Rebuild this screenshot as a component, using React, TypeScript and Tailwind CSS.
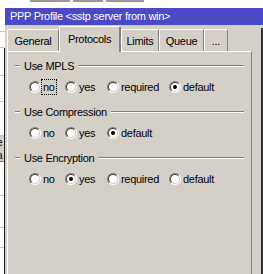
import React from 'react';

type RadioProps = {
  label: string;
  checked?: boolean;
  focused?: boolean;
  className?: string;
};

const Radio: React.FC<RadioProps> = ({ label, checked = false, focused = false, className = '' }) => (
  <div className={`flex items-center h-[16px] ${className}`}>
    {/* classic sunken radio circle */}
    <div className="w-[12px] h-[12px] shrink-0 rounded-full border border-t-[#808080] border-l-[#808080] border-r-white border-b-white">
      <div className="w-full h-full rounded-full border border-t-[#404040] border-l-[#404040] border-r-[#d4d0c8] border-b-[#d4d0c8] bg-white flex items-center justify-center">
        {checked && <div className="w-[4px] h-[4px] rounded-full bg-black"></div>}
      </div>
    </div>
    <span
      className={`h-[16px] leading-[14px] px-[1px] border ${focused ? 'border-dotted border-black' : 'border-transparent'}`}
    >
      {label}
    </span>
  </div>
);

const Etched: React.FC<{ className?: string }> = ({ className = '' }) => (
  <div className={`h-[2px] border-t border-t-[#808080] border-b border-b-white ${className}`}></div>
);

const Section: React.FC<{ title: string; first?: boolean; children: React.ReactNode }> = ({ title, first = false, children }) => (
  <div className={`flex flex-col px-[7px] ${first ? 'pt-[7px]' : 'pt-[10px]'}`}>
    <div className="flex items-center h-[14px]">
      <Etched className="w-[5px]" />
      <span className="px-[4px] leading-[14px]">{title}</span>
      <Etched className="flex-1" />
    </div>
    <div className="flex items-center mt-[6px] pl-[14px]">{children}</div>
  </div>
);

const tabs = [
  { label: 'General', w: 'w-[52px]' },
  { label: 'Protocols', w: 'w-[62px]', active: true },
  { label: 'Limits', w: 'w-[38px]' },
  { label: 'Queue', w: 'w-[45px]' },
  { label: '...', w: 'w-[24px]' },
];

export default function App() {
  return (
    <div
      className="w-[263px] h-[274px] overflow-hidden bg-white flex flex-col text-[11px] tracking-[-0.3px] text-black"
      style={{ fontFamily: '"Liberation Sans", Arial, sans-serif' }}
    >
      {/* background app peeking above the window */}
      <div className="h-[8px] shrink-0 flex items-start gap-[3px] pl-[30px]">
        <div className="w-[40px] h-[2px] bg-[#9a9a9a]"></div>
        <div className="w-[30px] h-[2px] bg-[#9a9a9a]"></div>
        <div className="w-[38px] h-[2px] bg-[#9a9a9a]"></div>
      </div>

      <div className="flex flex-1 min-h-0">
        {/* background app on the left */}
        <div className="w-[5px] shrink-0 flex flex-col">
          <div className="h-[24px] border-b border-[#c8c8c8]"></div>
          <div className="h-[16px] border-b border-[#c8c8c8] mr-[1px]"></div>
          <div className="flex-1 flex flex-col border-r border-r-[#202020]">
            <div className="h-[28px] border-b border-[#c8c8c8]"></div>
            <div className="h-[26px] border-b border-[#c8c8c8]"></div>
            <div className="h-[34px] border-b border-[#c8c8c8]"></div>
            <div className="h-[14px] bg-[#d4d0c8] text-[10px] leading-[14px] overflow-hidden">
              <span className="-ml-[3px]">e</span>
            </div>
            <div className="h-[12px] bg-[#d4d0c8] border-b border-[#808080] text-[10px] leading-[12px] overflow-hidden">
              <span className="-ml-[3px]">a</span>
            </div>
            <div className="h-[34px] border-b border-[#c8c8c8]"></div>
            <div className="h-[32px] border-b border-[#c8c8c8]"></div>
            <div className="h-[20px] border-b border-[#c8c8c8]"></div>
          </div>
        </div>

        {/* window */}
        <div className="flex-1 flex flex-col bg-[#d4d0c8]">
          <div className="h-[17px] shrink-0 bg-[#4a4ac6] text-white flex items-center pl-[5px]">
            PPP Profile &lt;sstp server from win&gt;
          </div>

          <div className="flex flex-1 min-h-0 pt-[1px]">
            <div className="w-[2px] shrink-0"></div>
            <div className="w-[245px] shrink-0 flex flex-col">
              {/* tabs */}
              <div className="h-[25px] shrink-0 flex items-end">
                {tabs.map((t) =>
                  t.active ? (
                    <div
                      key={t.label}
                      className={`${t.w} h-[26px] -mb-[1px] relative z-10 bg-[#d4d0c8] border-l border-t border-white border-r-2 border-r-[#808080] rounded-t-[2px] text-center pt-[5px] leading-[14px]`}
                    >
                      {t.label}
                    </div>
                  ) : (
                    <div
                      key={t.label}
                      className={`${t.w} h-[22px] bg-[#d4d0c8] border-l border-t border-white border-r border-r-[#808080] rounded-t-[2px] text-center pt-[4px] leading-[14px]`}
                    >
                      {t.label}
                    </div>
                  )
                )}
              </div>

              {/* tab panel */}
              <div className="flex-1 border-t border-l border-white border-r border-r-[#808080]">
                <Section title="Use MPLS" first>
                  <Radio label="no" focused className="w-[36px]" />
                  <Radio label="yes" className="w-[42px]" />
                  <Radio label="required" className="w-[62px]" />
                  <Radio label="default" checked />
                </Section>
                <Section title="Use Compression">
                  <Radio label="no" className="w-[36px]" />
                  <Radio label="yes" className="w-[42px]" />
                  <Radio label="default" checked />
                </Section>
                <Section title="Use Encryption">
                  <Radio label="no" className="w-[36px]" />
                  <Radio label="yes" checked className="w-[42px]" />
                  <Radio label="required" className="w-[62px]" />
                  <Radio label="default" />
                </Section>
              </div>
            </div>
            <div className="flex-1"></div>
            <div className="w-[2px] shrink-0 mt-[2px] bg-[#303030]"></div>
          </div>
        </div>
      </div>
    </div>
  );
}
